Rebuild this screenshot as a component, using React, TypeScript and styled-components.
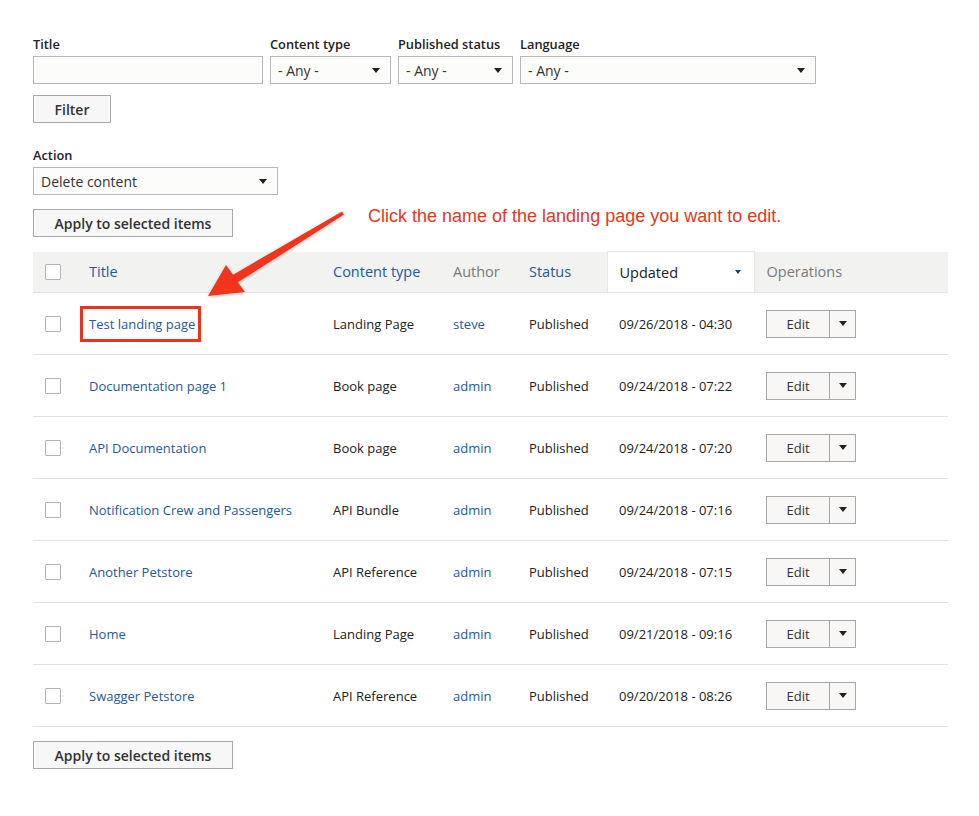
import React from "react";
import styled, { createGlobalStyle } from "styled-components";

const GlobalStyle = createGlobalStyle`
  html, body { margin: 0; padding: 0; background: #ffffff; }
  body { font-family: "Open Sans", "Noto Sans", sans-serif; color: #222; }
  * { box-sizing: border-box; }
`;

const LINK = "#225a9b";

const Page = styled.div`
  position: relative;
  width: 979px;
  min-height: 816px;
  padding: 34px 31px 40px 33px;
`;

const FilterRow = styled.div`
  display: flex;
  gap: 7px;
  align-items: flex-end;
`;

const Field = styled.div<{ $w: number }>`
  display: flex;
  flex-direction: column;
  width: ${(p) => p.$w}px;
`;

const Label = styled.label`
  font-size: 12.8px;
  font-weight: 600;
  line-height: 18px;
  color: #222;
  padding-top: 1px;
  margin-bottom: 3px;
  white-space: nowrap;
`;

const TextInput = styled.div`
  height: 28px;
  border: 1px solid #b8b8b8;
  background: #fcfcfa;
`;

const SelectBox = styled.div`
  height: 28px;
  border: 1px solid #b8b8b8;
  background: #fcfcfa;
  display: flex;
  align-items: center;
  justify-content: space-between;
  padding: 0 10px 0 7px;
  font-size: 14px;
  color: #333;
  white-space: nowrap;
`;

const Caret = styled.span<{ $size?: number; $color?: string }>`
  width: 0;
  height: 0;
  border-left: ${(p) => (p.$size ?? 9) / 2}px solid transparent;
  border-right: ${(p) => (p.$size ?? 9) / 2}px solid transparent;
  border-top: ${(p) => Math.round((p.$size ?? 9) * 0.6)}px solid ${(p) => p.$color ?? "#222"};
  display: inline-block;
  flex: none;
`;

const Button = styled.div<{ $w: number; $mt: number }>`
  width: ${(p) => p.$w}px;
  height: 28px;
  margin-top: ${(p) => p.$mt}px;
  border: 1px solid #a9a9a9;
  background: #f7f7f7;
  display: flex;
  align-items: center;
  justify-content: center;
  font-size: 14px;
  font-weight: 600;
  color: #333;
`;

const ActionBlock = styled.div`
  margin-top: 22px;
`;

const Table = styled.table`
  margin-top: 14px;
  width: 915px;
  border-collapse: collapse;
  table-layout: fixed;
`;

const HeadRow = styled.tr`
  background: #f2f2f1;
  height: 41px;
`;

const Th = styled.th<{ $tone?: "link" | "muted" | "active" }>`
  text-align: left;
  font-weight: 400;
  font-size: 14.5px;
  padding: 0 12px;
  border-bottom: 1px solid #e4e4e4;
  color: ${(p) => (p.$tone === "link" ? LINK : p.$tone === "active" ? "#222" : "#7a7a7a")};
  background: ${(p) => (p.$tone === "active" ? "#ffffff" : "transparent")};
  ${(p) => (p.$tone === "active" ? "border-left: 1px solid #e6e6e6; border-right: 1px solid #e6e6e6; border-top: 1px solid #e6e6e6;" : "")}
`;

const SortHead = styled.div`
  display: flex;
  align-items: center;
  justify-content: space-between;
  padding-right: 1px;
`;

const Row = styled.tr`
  height: 62px;
  border-bottom: 1px solid #e2e2e2;
`;

const Td = styled.td<{ $link?: boolean }>`
  padding: 0 12px;
  font-size: 13px;
  line-height: 18px;
  color: ${(p) => (p.$link ? LINK : "#222")};
  white-space: nowrap;
`;

const CheckCell = styled.td`
  padding: 0 0 0 12px;
`;

const CheckHead = styled.th`
  padding: 0 0 0 12px;
  border-bottom: 1px solid #e4e4e4;
`;

const Checkbox = styled.span`
  display: block;
  width: 16px;
  height: 16px;
  border: 1px solid #b4b4b4;
  background: #ffffff;
  border-radius: 1px;
`;

const Highlighted = styled.span`
  position: relative;
  &::after {
    content: "";
    position: absolute;
    top: -9px;
    bottom: -9px;
    left: -9px;
    right: -6px;
    border: 3px solid #e8341c;
  }
`;

const DropButton = styled.div`
  display: inline-flex;
  height: 28px;
  border: 1px solid #a8a8a8;
  background: #f8f7f5;
`;

const DropMain = styled.div`
  width: 63px;
  display: flex;
  align-items: center;
  justify-content: center;
  font-size: 13px;
  color: #333;
  border-right: 1px solid #a8a8a8;
`;

const DropToggle = styled.div`
  width: 25px;
  display: flex;
  align-items: center;
  justify-content: center;
`;

const Annotation = styled.div`
  position: absolute;
  left: 368px;
  top: 205px;
  font-family: "Liberation Sans", Arial, sans-serif;
  font-size: 18px;
  line-height: 22px;
  color: #e5371b;
  white-space: nowrap;
`;

const ArrowLayer = styled.svg`
  position: absolute;
  left: 0;
  top: 0;
  pointer-events: none;
`;

const rows = [
  ["Test landing page", "Landing Page", "steve", "Published", "09/26/2018 - 04:30"],
  ["Documentation page 1", "Book page", "admin", "Published", "09/24/2018 - 07:22"],
  ["API Documentation", "Book page", "admin", "Published", "09/24/2018 - 07:20"],
  ["Notification Crew and Passengers", "API Bundle", "admin", "Published", "09/24/2018 - 07:16"],
  ["Another Petstore", "API Reference", "admin", "Published", "09/24/2018 - 07:15"],
  ["Home", "Landing Page", "admin", "Published", "09/21/2018 - 09:16"],
  ["Swagger Petstore", "API Reference", "admin", "Published", "09/20/2018 - 08:26"],
];

export default function App() {
  return (
    <>
      <GlobalStyle />
      <Page>
        <FilterRow>
          <Field $w={230}>
            <Label>Title</Label>
            <TextInput />
          </Field>
          <Field $w={121}>
            <Label>Content type</Label>
            <SelectBox>
              - Any - <Caret />
            </SelectBox>
          </Field>
          <Field $w={115}>
            <Label>Published status</Label>
            <SelectBox>
              - Any - <Caret />
            </SelectBox>
          </Field>
          <Field $w={296}>
            <Label>Language</Label>
            <SelectBox>
              - Any - <Caret />
            </SelectBox>
          </Field>
        </FilterRow>
        <Button $w={78} $mt={11}>Filter</Button>

        <ActionBlock>
          <Field $w={245}>
            <Label>Action</Label>
            <SelectBox>
              Delete content <Caret />
            </SelectBox>
          </Field>
          <Button $w={200} $mt={14}>Apply to selected items</Button>
        </ActionBlock>

        <Table>
          <colgroup>
            <col style={{ width: 44 }} />
            <col style={{ width: 244 }} />
            <col style={{ width: 120 }} />
            <col style={{ width: 76 }} />
            <col style={{ width: 90 }} />
            <col style={{ width: 147 }} />
            <col style={{ width: 194 }} />
          </colgroup>
          <thead>
            <HeadRow>
              <CheckHead>
                <Checkbox />
              </CheckHead>
              <Th $tone="link">Title</Th>
              <Th $tone="link">Content type</Th>
              <Th $tone="muted">Author</Th>
              <Th $tone="link">Status</Th>
              <Th $tone="active">
                <SortHead>
                  Updated <Caret $size={6} $color="#1f3f66" />
                </SortHead>
              </Th>
              <Th $tone="muted">Operations</Th>
            </HeadRow>
          </thead>
          <tbody>
            {rows.map((r, i) => (
              <Row key={i}>
                <CheckCell>
                  <Checkbox />
                </CheckCell>
                <Td $link>{i === 0 ? <Highlighted>{r[0]}</Highlighted> : r[0]}</Td>
                <Td>{r[1]}</Td>
                <Td $link>{r[2]}</Td>
                <Td>{r[3]}</Td>
                <Td>{r[4]}</Td>
                <Td>
                  <DropButton>
                    <DropMain>Edit</DropMain>
                    <DropToggle>
                      <Caret $size={8} />
                    </DropToggle>
                  </DropButton>
                </Td>
              </Row>
            ))}
          </tbody>
        </Table>
        <Button $w={200} $mt={14}>Apply to selected items</Button>

        <Annotation>Click the name of the landing page you want to edit.</Annotation>
        <ArrowLayer width={979} height={816} viewBox="0 0 979 816">
          <defs>
            <filter id="arrowShadow" x="-20%" y="-20%" width="140%" height="140%">
              <feDropShadow dx="0" dy="1" stdDeviation="1.5" floodColor="#000" floodOpacity="0.25" />
            </filter>
          </defs>
          <polygon
            points="208,296 245,292 237.9,282.3 344,214.6 342,211.4 233.1,274.7 226,265"
            fill="#f0361d"
            filter="url(#arrowShadow)"
          />
        </ArrowLayer>
      </Page>
    </>
  );
}
